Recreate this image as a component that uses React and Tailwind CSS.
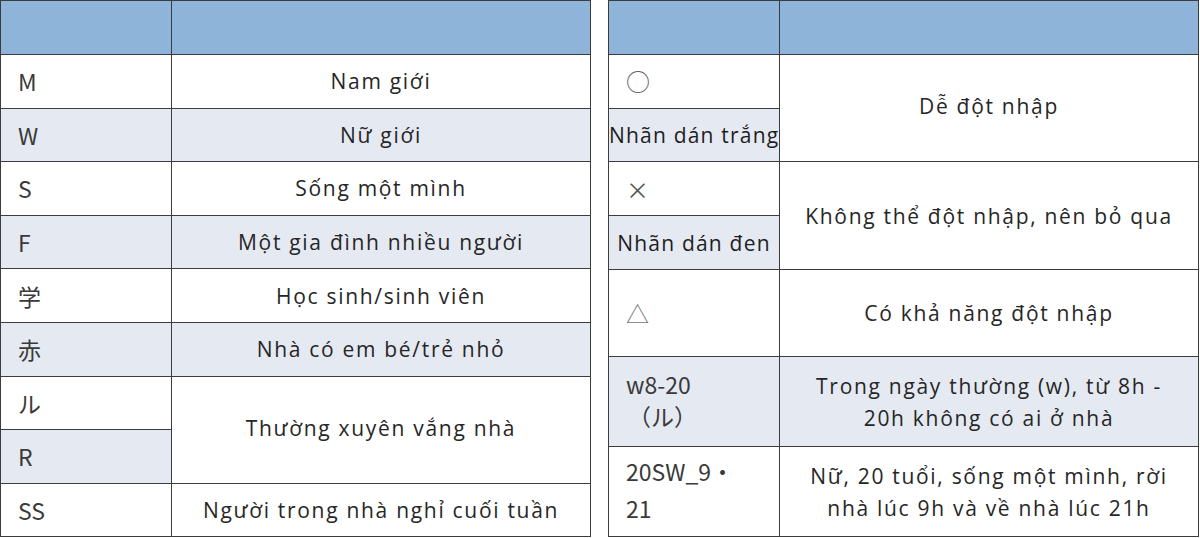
const leftRows = [
  { code: 'M', desc: 'Nam giới', alt: false },
  { code: 'W', desc: 'Nữ giới', alt: true },
  { code: 'S', desc: 'Sống một mình', alt: false },
  { code: 'F', desc: 'Một gia đình nhiều người', alt: true },
  { code: '学', desc: 'Học sinh/sinh viên', alt: false },
  { code: '赤', desc: 'Nhà có em bé/trẻ nhỏ', alt: true },
]

const jp = { fontFamily: '"Noto Sans CJK JP", "Noto Sans", sans-serif' }

function Code({ children, className = '' }) {
  return (
    <td className={`border border-[#3c3c3c] px-[17px] text-left align-middle text-[23px] leading-[30px] text-[#3a3a3a] ${className}`} style={jp}>
      {children}
    </td>
  )
}

function Desc({ children, rowSpan, className = '' }) {
  return (
    <td rowSpan={rowSpan} className={`border border-[#3c3c3c] px-1 text-center align-middle text-[21px] leading-[32px] tracking-[1.7px] whitespace-nowrap text-[#262626] ${className}`}>
      {children}
    </td>
  )
}

function Label({ children }) {
  return (
    <td className="border border-[#3c3c3c] bg-[#e5e9f2] px-0 text-center text-[21px] leading-[30px] tracking-[1.2px] whitespace-nowrap text-[#1e1e1e]">
      {children}
    </td>
  )
}

function Head() {
  return (
    <thead>
      <tr className="h-[54px] bg-[#8fb4da]">
        <th className="w-[171px] border border-[#3c3c3c]"></th>
        <th className="border border-[#3c3c3c]"></th>
      </tr>
    </thead>
  )
}

export default function App() {
  return (
    <div className="flex h-[538px] w-[1200px] items-start gap-[17px] overflow-hidden bg-white font-['Open_Sans',sans-serif]">
      {/* left legend */}
      <table className="w-[591px] table-fixed border-collapse">
        <Head />
        <tbody>
          {leftRows.map((r) => (
            <tr key={r.code} className={`h-[53.6px] ${r.alt ? 'bg-[#e5e9f2]' : 'bg-white'}`}>
              <Code>{r.code}</Code>
              <Desc>{r.desc}</Desc>
            </tr>
          ))}
          <tr className="h-[53.6px] bg-white">
            <Code>ル</Code>
            <Desc rowSpan={2} className="bg-white pb-1">Thường xuyên vắng nhà</Desc>
          </tr>
          <tr className="h-[53.6px]">
            <Code className="bg-[#e5e9f2]">R</Code>
          </tr>
          <tr className="h-[53.6px] bg-white">
            <Code>SS</Code>
            <Desc>Người trong nhà nghỉ cuối tuần</Desc>
          </tr>
        </tbody>
      </table>

      {/* right legend */}
      <table className="w-[591px] table-fixed border-collapse">
        <Head />
        <tbody>
          <tr className="h-[53.5px] bg-white">
            <Code className="text-[24px] text-[#666]">○</Code>
            <Desc rowSpan={2} className="pb-1">Dễ đột nhập</Desc>
          </tr>
          <tr className="h-[53.5px]">
            <Label>Nhãn dán trắng</Label>
          </tr>
          <tr className="h-[54px] bg-white">
            <Code className="text-[20px] text-[#555]">×</Code>
            <Desc rowSpan={2}>Không thể đột nhập, nên bỏ qua</Desc>
          </tr>
          <tr className="h-[54px]">
            <Label>Nhãn dán đen</Label>
          </tr>
          <tr className="h-[87px] bg-white">
            <Code className="text-[20px] text-[#777]">△</Code>
            <Desc>Có khả năng đột nhập</Desc>
          </tr>
          <tr className="h-[90px] bg-[#e5e9f2]">
            <Code className="pb-1 leading-[32px]">w8-20<br /><span className="pl-[2px]">（ル）</span></Code>
            <Desc>Trong ngày thường (w), từ 8h -<br />20h không có ai ở nhà</Desc>
          </tr>
          <tr className="h-[90px] bg-white">
            <Code className="pb-1 leading-[37px]">20SW_9・<br />21</Code>
            <Desc>Nữ, 20 tuổi, sống một mình, rời<br />nhà lúc 9h và về nhà lúc 21h</Desc>
          </tr>
        </tbody>
      </table>
    </div>
  )
}
